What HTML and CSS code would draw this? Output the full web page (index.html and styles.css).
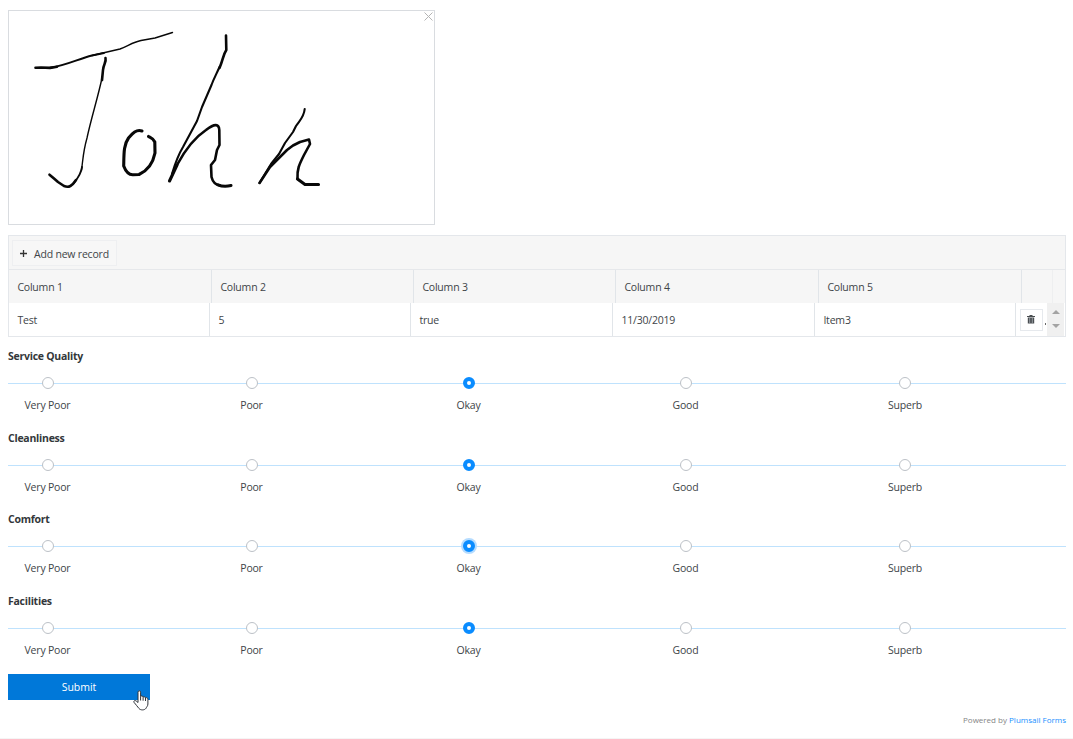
FILE: index.html
```html
<!DOCTYPE html>
<html lang="en">
<head>
<meta charset="utf-8">
<title>Form</title>
<link rel="stylesheet" href="styles.css">
</head>
<body>
<main class="form">
  <div class="signature">
    <svg class="ink" viewBox="9 11 425 213" width="425" height="213">
      <path class="w3" d="M35.500 67.700 L41 67.500 L50 67.900 L57 66.700"/>
      <path class="w2" d="M50 67.700 C65 66 78 59 92 55.500 L104 53"/>
      <path class="w15" d="M92 55.500 L120 49 C128 46 133 42 141 40.500 L155 38 L172.500 32.500"/>
      <path class="w3" d="M105.500 58 C106.500 62 103.500 64 103 70 L102 80"/>
      <path class="w15" d="M102 78 C98 97 91 119 87 138 C83 152 83 160 81.500 170"/>
      <path class="w2" d="M82 167 C81 175 77 179 73 184"/>
      <path class="w3" d="M76 180 C72 186 69 188 64 186 L58 182 L54 178.500 L49.500 174.700"/>
      <path class="w35" d="M142 131 C136 129 132 134 128.500 138 C123.500 145 124 154 123.700 166 C126 172 129 175 133 174.800 L139 174.500 C149 170 153 163 155 153 L154.800 142 C153 138 151 138 148.500 136.500"/>
      <path class="w3" d="M226 35.500 L226.300 50 C223 55 223 60 219.500 68"/>
      <path class="w22" d="M219.500 67 C216 75 214 78 211.500 85 L202 107 L197 121 L183 147 C177 157 175 164 172 174"/>
      <path class="w35" d="M169.500 181 L177 165"/>
      <path class="w3" d="M177 165 C185 150 194 138 206 130 C215 123 219 124 219.300 130 L219.500 145 L217 150 L215 160 L211 165 L211.500 177 C213 183 216 185 220 185.500"/>
      <path class="w35" d="M218 184.800 C223 187 227 186.500 231 185.500"/>
      <path class="w22" d="M304.700 109 C304 117 300 120 296 126 L293 132 L285 143 L279 154 L271 164 L259.500 183"/>
      <path class="w3" d="M259.500 183 L270 167 L282 155 L287 150 L293 145.500 L300 142 L309 139.500 L310 144 L304 155 C299 165 297 169 297.500 179"/>
      <path class="w35" d="M297.500 179 L305 184.500 L318.500 184.500"/>
    </svg>
    <svg class="clear" viewBox="0 0 9 9" width="9" height="9"><path d="M.5.5l8 8M8.500.5l-8 8"/></svg>
  </div>

  <section class="grid">
    <div class="toolbar"><button class="add"><svg viewBox="0 0 7 7" width="7" height="7"><path d="M3.500 0v7M0 3.500h7"/></svg><span>Add new record</span></button></div>
    <div class="row head">
      <div>Column 1</div><div>Column 2</div><div>Column 3</div><div>Column 4</div><div>Column 5</div><div></div><div></div>
    </div>
    <div class="row body">
      <div>Test</div><div>5</div><div>true</div><div>11/30/2019</div><div>Item3</div>
      <div class="command">
        <button class="delete"><svg viewBox="0 0 8 9" width="8" height="9"><path class="lid" d="M0 1h2.500V0h3v1H8v1H0z"/><path d="M.8 2.500h6.400v6H.8z"/><path class="slots" d="M2.700 3v5M5.300 3v5"/></svg></button><i class="more"></i>
      </div>
      <div class="scroll"><i class="up"></i><i class="down"></i></div>
    </div>
  </section>

  <section class="rating">
    <h2>Service Quality</h2>
    <div class="scale"><label><i class="dot"></i>Very Poor</label><label><i class="dot"></i>Poor</label><label><i class="dot on"></i>Okay</label><label><i class="dot"></i>Good</label><label><i class="dot"></i>Superb</label></div>
  </section>
  <section class="rating">
    <h2>Cleanliness</h2>
    <div class="scale"><label><i class="dot"></i>Very Poor</label><label><i class="dot"></i>Poor</label><label><i class="dot on"></i>Okay</label><label><i class="dot"></i>Good</label><label><i class="dot"></i>Superb</label></div>
  </section>
  <section class="rating">
    <h2>Comfort</h2>
    <div class="scale"><label><i class="dot"></i>Very Poor</label><label><i class="dot"></i>Poor</label><label><i class="dot on focus"></i>Okay</label><label><i class="dot"></i>Good</label><label><i class="dot"></i>Superb</label></div>
  </section>
  <section class="rating">
    <h2>Facilities</h2>
    <div class="scale"><label><i class="dot"></i>Very Poor</label><label><i class="dot"></i>Poor</label><label><i class="dot on"></i>Okay</label><label><i class="dot"></i>Good</label><label><i class="dot"></i>Superb</label></div>
  </section>

  <button class="submit">Submit
    <svg class="pointer" viewBox="0 0 16 21" width="16" height="21"><path d="M5 12.500V2.200C5 .3 7.600.3 7.600 2.200V6.500C8 5.500 10 5.800 10.100 7.200C10.600 6.300 12.400 6.700 12.500 8C13.200 7.200 14.900 7.700 14.900 9.300V14C14.900 16 13.500 17 13 18.300C11.500 20.400 7.500 20.400 6 18.500C4.500 16.500 2.500 14.300 1 12.300C.3 10.800 2 10 3.200 11z"/><path d="M7.600 6.500v4M10.100 7.200v3.500M12.500 8v3"/></svg>
  </button>
  <footer>Powered by <a>Plumsail Forms</a></footer>
</main>
<div class="bottom"></div>
</body>
</html>
```

FILE: styles.css
```css
* { box-sizing: border-box; }
body {
  margin: 0;
  height: 739px;
  overflow: hidden;
  background: #fff;
  color: #404448;
  font: 10.5px/16px "Open Sans", "Noto Sans", sans-serif;
  letter-spacing: -0.2px;
}
button {
  font: inherit;
  letter-spacing: inherit;
  color: inherit;
  padding: 0;
  border: 0;
}
.form { height: 738px; padding: 10px 7px 0 8px; }

.signature {
  position: relative;
  width: 427px;
  height: 215px;
  border: 1px solid #d9dce0;
}
.ink { display: block; fill: none; stroke: #080808; stroke-linecap: round; stroke-linejoin: round; }
.w15 { stroke-width: 1.4; }
.w2 { stroke-width: 1.9; }
.w22 { stroke-width: 2.1; }
.w3 { stroke-width: 2.6; }
.w35 { stroke-width: 3.1; }
.clear { position: absolute; top: 1px; right: 1px; fill: none; stroke: #b4b4b4; }

.grid { margin-top: 10px; height: 102px; border: 1px solid #e4e7eb; }
.toolbar { height: 34px; padding: 4px 3px; background: #f6f6f6; border-bottom: 1px solid #e6e8eb; }
.add {
  display: flex;
  align-items: center;
  gap: 7px;
  width: 105px;
  height: 26px;
  padding: 1px 0 0 7px;
  border: 1px solid #eeeff1;
  background: #f7f7f7;
}
.add svg { stroke: #333; stroke-width: 1.3; }
.row { display: grid; height: 33px; }
.row > div { padding: 1px 0 0 8.4px; line-height: 33px; height: 33px; border-right: 1px solid #e1e5e9; }
.row > div:last-child { border-right: 0; }
.head { grid-template-columns: 203px 202px 202px 203px 203px 31px 1fr; background: #f6f6f6; }
.head > div:nth-child(6) { border-color: #eeeff0; }
.body { grid-template-columns: 201px 201px 202px 202px 201px 31px 1fr; }
.body > .command { display: flex; align-items: center; gap: 2px; padding: 0 0 0 4px; border: 0; }
.delete {
  display: flex;
  align-items: center;
  justify-content: center;
  width: 23px;
  height: 22px;
  flex: none;
  padding-right: 1px;
  border: 1px solid #e6e9ed;
  background: #fff;
}
.delete path { fill: #494d50; }
.delete .slots { stroke: #b9c0c5; stroke-width: .7; }
.more { width: 1px; height: 2px; margin-top: 8px; background: #666; }
.body > .scroll {
  display: flex;
  flex-direction: column;
  align-items: center;
  gap: 10px;
  width: 17px;
  padding: 7px 0 0;
  background: #f0f0f0;
}
.up, .down { border: 4px solid transparent; border-top: 0; border-bottom: 4px solid #a3a3a3; }
.down { border-bottom: 0; border-top: 4px solid #a3a3a3; }

.rating { height: 81.67px; padding-top: 11px; }
.rating h2 { margin: 0; font-size: 10.5px; line-height: 16px; font-weight: 700; color: #33373a; letter-spacing: -.25px; }
.scale {
  display: grid;
  grid-template-columns: 79px 329px 105px 329px 110px;
  margin-top: 19px;
  border-top: 1px solid #bfe2fd;
}
.scale label { display: flex; flex-direction: column; align-items: center; gap: 8px; margin-top: -7px; }
.dot { width: 12px; height: 12px; border: 1px solid #bcc1c7; border-radius: 50%; background: #fff; }
.dot.on { border: 4px solid #0a8cff; }
.dot.focus { box-shadow: 0 0 0 2px #b5dcff; }

.submit {
  position: relative;
  display: block;
  width: 142px;
  height: 26px;
  margin-top: 10px;
  background: #0078d9;
  color: #fff;
  letter-spacing: 0;
}
.pointer { position: absolute; left: 125px; top: 16px; fill: #fff; stroke: #30343a; stroke-width: 1; }
footer { margin-top: 12px; text-align: right; font-size: 8px; letter-spacing: 0; color: #858585; }
footer a { color: #1890ff; }
.bottom { height: 1px; background: #f5f5f5; }
```
